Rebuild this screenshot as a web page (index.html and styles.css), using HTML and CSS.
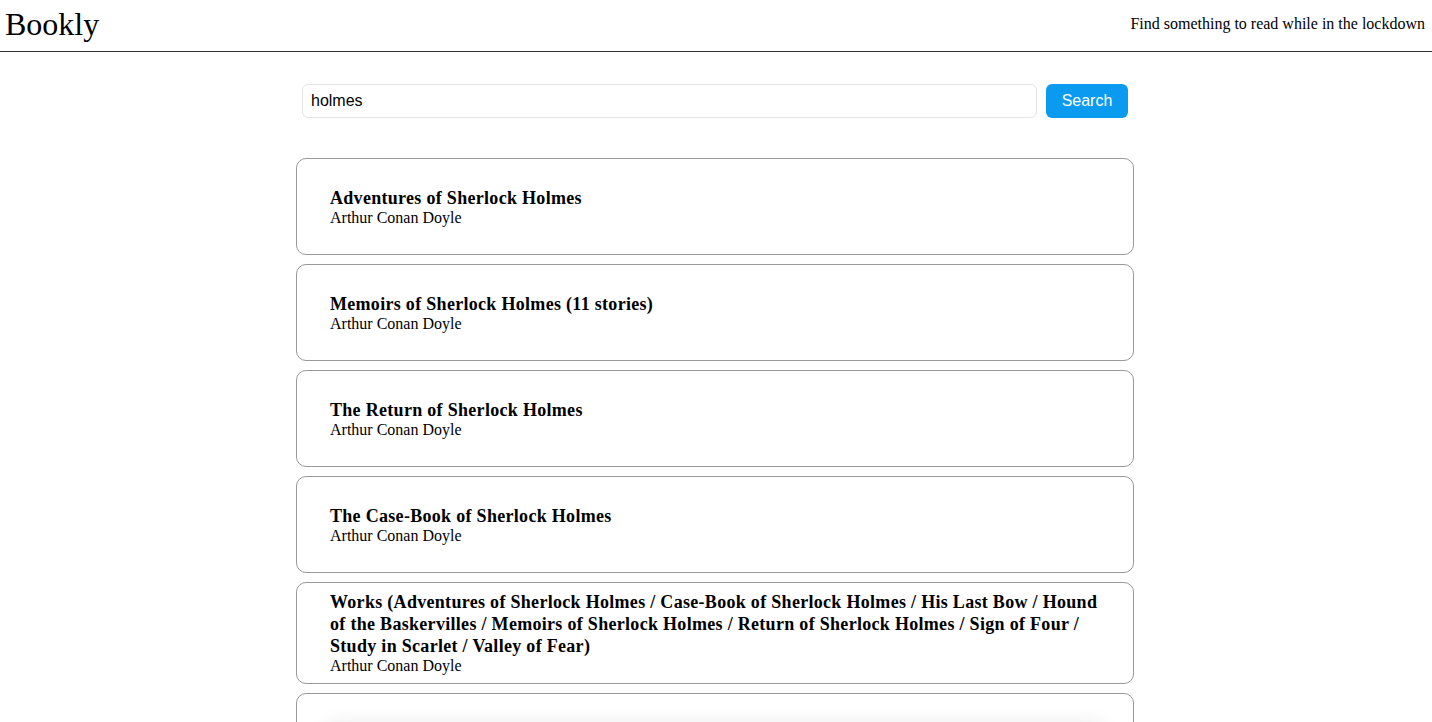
FILE: index.html
```html
<!DOCTYPE html>
<html>
<head>
<meta charset="utf-8">
<title>Bookly</title>
<link rel="stylesheet" href="styles.css">
</head>
<body>
<header class="topbar">
  <div class="brand">Bookly</div>
  <div class="tagline">Find something to read while in the lockdown</div>
</header>
<main class="main">
  <form class="search">
    <input class="search-input" type="text" value="holmes">
    <button class="search-btn" type="button">Search</button>
  </form>
  <ul class="results">
    <li class="card"><div class="title">Adventures of Sherlock Holmes</div><div class="author">Arthur Conan Doyle</div></li>
    <li class="card"><div class="title">Memoirs of Sherlock Holmes (11 stories)</div><div class="author">Arthur Conan Doyle</div></li>
    <li class="card"><div class="title">The Return of Sherlock Holmes</div><div class="author">Arthur Conan Doyle</div></li>
    <li class="card"><div class="title">The Case-Book of Sherlock Holmes</div><div class="author">Arthur Conan Doyle</div></li>
    <li class="card"><div class="title">Works (Adventures of Sherlock Holmes / Case-Book of Sherlock Holmes / His Last Bow / Hound of the Baskervilles / Memoirs of Sherlock Holmes / Return of Sherlock Holmes / Sign of Four / Study in Scarlet / Valley of Fear)</div><div class="author">Arthur Conan Doyle</div></li>
    <li class="card card-last"><div class="shade"></div></li>
  </ul>
</main>
</body>
</html>
```
FILE: styles.css
```css
html, body {
  margin: 0;
  padding: 0;
  background: #fff;
  color: #000;
  font-family: "Liberation Serif", "Times New Roman", serif;
}
.topbar {
  display: flex;
  justify-content: space-between;
  align-items: center;
  height: 51px;
  border-bottom: 1px solid #333;
  padding: 0 7px 0 5px;
}
.brand {
  font-size: 32px;
  line-height: 1;
  margin-top: -4px;
}
.tagline {
  font-size: 16px;
  margin-top: -4px;
}
.main {
  width: 838px;
  margin: 0 auto;
  transform: translateX(-1px);
}
.search {
  display: flex;
  gap: 9px;
  padding: 0 6px;
  margin: 32px 0 40px;
}
.search-input {
  flex: 1;
  height: 34px;
  box-sizing: border-box;
  border: 1px solid #e3e3e3;
  border-radius: 6px;
  padding: 0 8px;
  font-family: "Liberation Sans", Arial, sans-serif;
  font-size: 16px;
  color: #000;
  outline: none;
}
.search-btn {
  width: 82px;
  height: 34px;
  border: none;
  border-radius: 6px;
  background: #0a9af0;
  color: #fff;
  font-family: "Liberation Sans", Arial, sans-serif;
  font-size: 16px;
  padding: 0;
}
.results {
  list-style: none;
  margin: 0;
  padding: 0;
  display: flex;
  flex-direction: column;
  gap: 9px;
}
.card {
  border: 1px solid #999;
  border-radius: 10px;
  padding: 8px 33px;
  min-height: 79px;
  display: flex;
  flex-direction: column;
  justify-content: center;
  overflow: hidden;
}
.title {
  font-weight: bold;
  font-size: 18px;
  line-height: 22px;
  letter-spacing: 0.3px;
}
.author {
  font-size: 16px;
  line-height: 18px;
}
.card-last {
  position: relative;
}
.shade {
  position: absolute;
  left: 30px;
  right: 30px;
  top: 36px;
  height: 60px;
  background: #fff;
  box-shadow: 0 0 22px rgba(0, 0, 0, 0.18);
}
```
